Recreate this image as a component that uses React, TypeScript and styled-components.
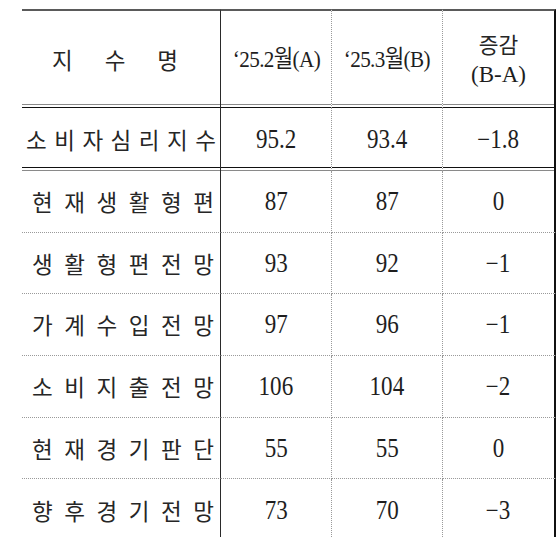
import React from "react";
import styled, { createGlobalStyle, css } from "styled-components";

const Global = createGlobalStyle`
  html, body { margin: 0; padding: 0; background: #ffffff; }
  body { font-family: "Liberation Serif", "Noto Sans CJK KR", serif; color: #1e1e1e; }
`;

const Page = styled.div`
  padding: 9px 0 0 22px;
  width: 557px;
  height: 537px;
  box-sizing: border-box;
  overflow: hidden;
`;

const Grid = styled.div`
  display: grid;
  grid-template-columns: 199px 111px 111px 113px;
  width: 534px;
`;

type Col = 0 | 1 | 2 | 3;
type Edge = "head" | "lead" | "dot" | "none";

const rightBorder = (c: Col) => {
  if (c === 0) return css`border-right: 1px solid #2a2a2a;`;
  if (c === 3) return css`border-right: 2px solid #111;`;
  return css`border-right: 1px dotted #9a9a9a;`;
};

const edgeStyle = (e: Edge) => {
  switch (e) {
    case "head":
      return css`
        height: 99px;
        border-top: 2px solid #5a5a5a;
        background:
          linear-gradient(#8a8a8a, #8a8a8a) left 0 bottom 3px / 100% 1px no-repeat,
          linear-gradient(#111, #111) left 0 bottom 0 / 100% 1px no-repeat;
      `;
    case "lead":
      return css`
        height: 63px;
        background:
          linear-gradient(#111, #111) left 0 bottom 3px / 100% 1px no-repeat,
          linear-gradient(#8a8a8a, #8a8a8a) left 0 bottom 0 / 100% 1px no-repeat;
      `;
    case "dot":
      return css`
        height: 61.7px;
        border-bottom: 1px dotted #9a9a9a;
      `;
    default:
      return css`height: 62px;`;
  }
};

const Cell = styled.div<{ $col: Col; $edge: Edge }>`
  box-sizing: border-box;
  display: flex;
  align-items: center;
  justify-content: center;
  ${(p) => rightBorder(p.$col)}
  ${(p) => edgeStyle(p.$edge)}
`;

const NameCell = styled(Cell)<{ $pl: number; $pr: number }>`
  justify-content: space-between;
  padding-left: ${(p) => p.$pl}px;
  padding-right: ${(p) => p.$pr}px;
  font-family: "Noto Sans CJK KR", sans-serif;
  font-size: 22.5px;
  color: #262626;
`;

const Char = styled.span`
  display: block;
  line-height: 1;
`;

const Num = styled.span`
  display: inline-block;
  font-family: "Liberation Serif", "Noto Sans CJK KR", serif;
  font-size: 26.5px;
  line-height: 1;
  transform: scaleX(0.87);
  color: #1e1e1e;
`;

const HeadText = styled.span`
  display: inline-block;
  font-family: "Liberation Serif", "Noto Sans CJK KR", serif;
  font-size: 23.5px;
  line-height: 1;
  letter-spacing: -0.7px;
  transform: scaleX(0.9);
  white-space: nowrap;
  color: #1e1e1e;
`;

const Stack = styled.div`
  display: flex;
  flex-direction: column;
  align-items: center;
  gap: 9px;
`;

const KoSmall = styled.span`
  font-family: "Noto Sans CJK KR", sans-serif;
  font-size: 21.5px;
  line-height: 1;
  color: #262626;
`;

const Paren = styled.span`
  font-family: "Liberation Serif", serif;
  font-size: 23px;
  line-height: 1;
  color: #1e1e1e;
`;

type Row = { name: string; a: string; b: string; d: string; pl: number; pr: number; edge: Edge };

const rows: Row[] = [
  { name: "소비자심리지수", a: "95.2", b: "93.4", d: "−1.8", pl: 4, pr: 4, edge: "lead" },
  { name: "현재생활형편", a: "87", b: "87", d: "0", pl: 10, pr: 6, edge: "dot" },
  { name: "생활형편전망", a: "93", b: "92", d: "−1", pl: 10, pr: 6, edge: "dot" },
  { name: "가계수입전망", a: "97", b: "96", d: "−1", pl: 10, pr: 6, edge: "dot" },
  { name: "소비지출전망", a: "106", b: "104", d: "−2", pl: 10, pr: 6, edge: "dot" },
  { name: "현재경기판단", a: "55", b: "55", d: "0", pl: 10, pr: 6, edge: "dot" },
  { name: "향후경기전망", a: "73", b: "70", d: "−3", pl: 10, pr: 6, edge: "dot" },
];

const Spread = ({ text }: { text: string }) => (
  <>
    {Array.from(text).map((ch, i) => (
      <Char key={i}>{ch}</Char>
    ))}
  </>
);

export default function App() {
  return (
    <Page>
      <Global />
      <Grid>
        <NameCell $col={0} $edge="head" $pl={30} $pr={42}>
          <Spread text="지수명" />
        </NameCell>
        <Cell $col={1} $edge="head">
          <HeadText>‘25.2월(A)</HeadText>
        </Cell>
        <Cell $col={2} $edge="head">
          <HeadText>‘25.3월(B)</HeadText>
        </Cell>
        <Cell $col={3} $edge="head">
          <Stack>
            <KoSmall>증감</KoSmall>
            <Paren>(B-A)</Paren>
          </Stack>
        </Cell>
        {rows.map((r) => (
          <React.Fragment key={r.name}>
            <NameCell $col={0} $edge={r.edge} $pl={r.pl} $pr={r.pr}>
              <Spread text={r.name} />
            </NameCell>
            <Cell $col={1} $edge={r.edge}>
              <Num>{r.a}</Num>
            </Cell>
            <Cell $col={2} $edge={r.edge}>
              <Num>{r.b}</Num>
            </Cell>
            <Cell $col={3} $edge={r.edge}>
              <Num>{r.d}</Num>
            </Cell>
          </React.Fragment>
        ))}
      </Grid>
    </Page>
  );
}
